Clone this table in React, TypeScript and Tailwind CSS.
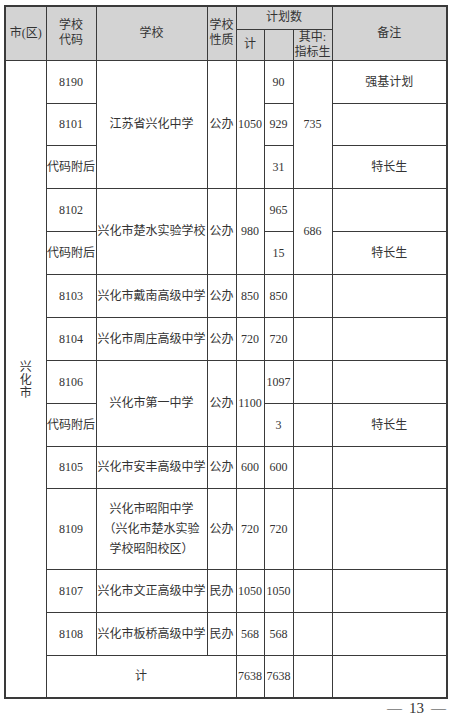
import React from 'react'

const font = { fontFamily: '"Liberation Serif", "Noto Sans CJK SC", serif' }

type CellProps = {
  children?: React.ReactNode
  rs?: number
  cs?: number
  head?: boolean
  className?: string
}

function Td({ children, rs, cs, head, className = '' }: CellProps) {
  return (
    <td
      rowSpan={rs}
      colSpan={cs}
      className={`border-[1.5px] border-[#3a3a3a] p-0 text-center align-middle text-[12px] ${
        head ? 'bg-[#d3d3d3] leading-[15px]' : 'leading-[20px]'
      } ${className}`}
    >
      {children}
    </td>
  )
}

export default function App() {
  return (
    <div className="relative h-[718px] w-[454px] overflow-hidden bg-white text-[#333]" style={font}>
      <div className="pl-[4px] pt-[5px]">
        <table className="w-[442px] table-fixed border-collapse border-2 border-[#3a3a3a]">
          <colgroup>
            <col className="w-[41px]" />
            <col className="w-[50px]" />
            <col className="w-[111px]" />
            <col className="w-[29px]" />
            <col className="w-[28px]" />
            <col className="w-[29px]" />
            <col className="w-[39px]" />
            <col className="w-[115px]" />
          </colgroup>
          <thead>
            <tr className="h-[23px]">
              <Td head rs={2}>市(区)</Td>
              <Td head rs={2}>学校<br />代码</Td>
              <Td head rs={2}>学校</Td>
              <Td head rs={2}>学校<br />性质</Td>
              <Td head cs={3}>计划数</Td>
              <Td head rs={2}>备注</Td>
            </tr>
            <tr className="h-[31px]">
              <Td head>计</Td>
              <Td head></Td>
              <Td head>其中:<br />指标生</Td>
            </tr>
          </thead>
          <tbody>
            <tr className="h-[43px]">
              <Td rs={14}>
                <div className="flex flex-col items-center pt-[4px] leading-[13px]">
                  <span>兴</span>
                  <span>化</span>
                  <span>市</span>
                </div>
              </Td>
              <Td>8190</Td>
              <Td rs={3}>江苏省兴化中学</Td>
              <Td rs={3}>公办</Td>
              <Td rs={3}>1050</Td>
              <Td>90</Td>
              <Td rs={3}>735</Td>
              <Td>强基计划</Td>
            </tr>
            <tr className="h-[42px]">
              <Td>8101</Td>
              <Td>929</Td>
              <Td></Td>
            </tr>
            <tr className="h-[43px]">
              <Td>代码附后</Td>
              <Td>31</Td>
              <Td>特长生</Td>
            </tr>
            <tr className="h-[43px]">
              <Td>8102</Td>
              <Td rs={2}>兴化市楚水实验学校</Td>
              <Td rs={2}>公办</Td>
              <Td rs={2}>980</Td>
              <Td>965</Td>
              <Td rs={2}>686</Td>
              <Td></Td>
            </tr>
            <tr className="h-[43px]">
              <Td>代码附后</Td>
              <Td>15</Td>
              <Td>特长生</Td>
            </tr>
            <tr className="h-[43px]">
              <Td>8103</Td>
              <Td>兴化市戴南高级中学</Td>
              <Td>公办</Td>
              <Td>850</Td>
              <Td>850</Td>
              <Td></Td>
              <Td></Td>
            </tr>
            <tr className="h-[43px]">
              <Td>8104</Td>
              <Td>兴化市周庄高级中学</Td>
              <Td>公办</Td>
              <Td>720</Td>
              <Td>720</Td>
              <Td></Td>
              <Td></Td>
            </tr>
            <tr className="h-[43px]">
              <Td>8106</Td>
              <Td rs={2}>兴化市第一中学</Td>
              <Td rs={2}>公办</Td>
              <Td rs={2}>1100</Td>
              <Td>1097</Td>
              <Td></Td>
              <Td></Td>
            </tr>
            <tr className="h-[43px]">
              <Td>代码附后</Td>
              <Td>3</Td>
              <Td></Td>
              <Td>特长生</Td>
            </tr>
            <tr className="h-[42px]">
              <Td>8105</Td>
              <Td>兴化市安丰高级中学</Td>
              <Td>公办</Td>
              <Td>600</Td>
              <Td>600</Td>
              <Td></Td>
              <Td></Td>
            </tr>
            <tr className="h-[81px]">
              <Td>8109</Td>
              <Td>
                兴化市昭阳中学<br />（兴化市楚水实验<br />学校昭阳校区）
              </Td>
              <Td>公办</Td>
              <Td>720</Td>
              <Td>720</Td>
              <Td></Td>
              <Td></Td>
            </tr>
            <tr className="h-[43px]">
              <Td>8107</Td>
              <Td>兴化市文正高级中学</Td>
              <Td>民办</Td>
              <Td>1050</Td>
              <Td>1050</Td>
              <Td></Td>
              <Td></Td>
            </tr>
            <tr className="h-[43px]">
              <Td>8108</Td>
              <Td>兴化市板桥高级中学</Td>
              <Td>民办</Td>
              <Td>568</Td>
              <Td>568</Td>
              <Td></Td>
              <Td></Td>
            </tr>
            <tr className="h-[43px]">
              <Td cs={3}>计</Td>
              <Td>7638</Td>
              <Td>7638</Td>
              <Td></Td>
              <Td></Td>
            </tr>
          </tbody>
        </table>
      </div>
      <div className="flex justify-end gap-[7px] pr-[8px] pt-[1px] text-[15px] leading-[17px] text-[#333]">
        <span>—</span>
        <span>13</span>
        <span>—</span>
      </div>
    </div>
  )
}
